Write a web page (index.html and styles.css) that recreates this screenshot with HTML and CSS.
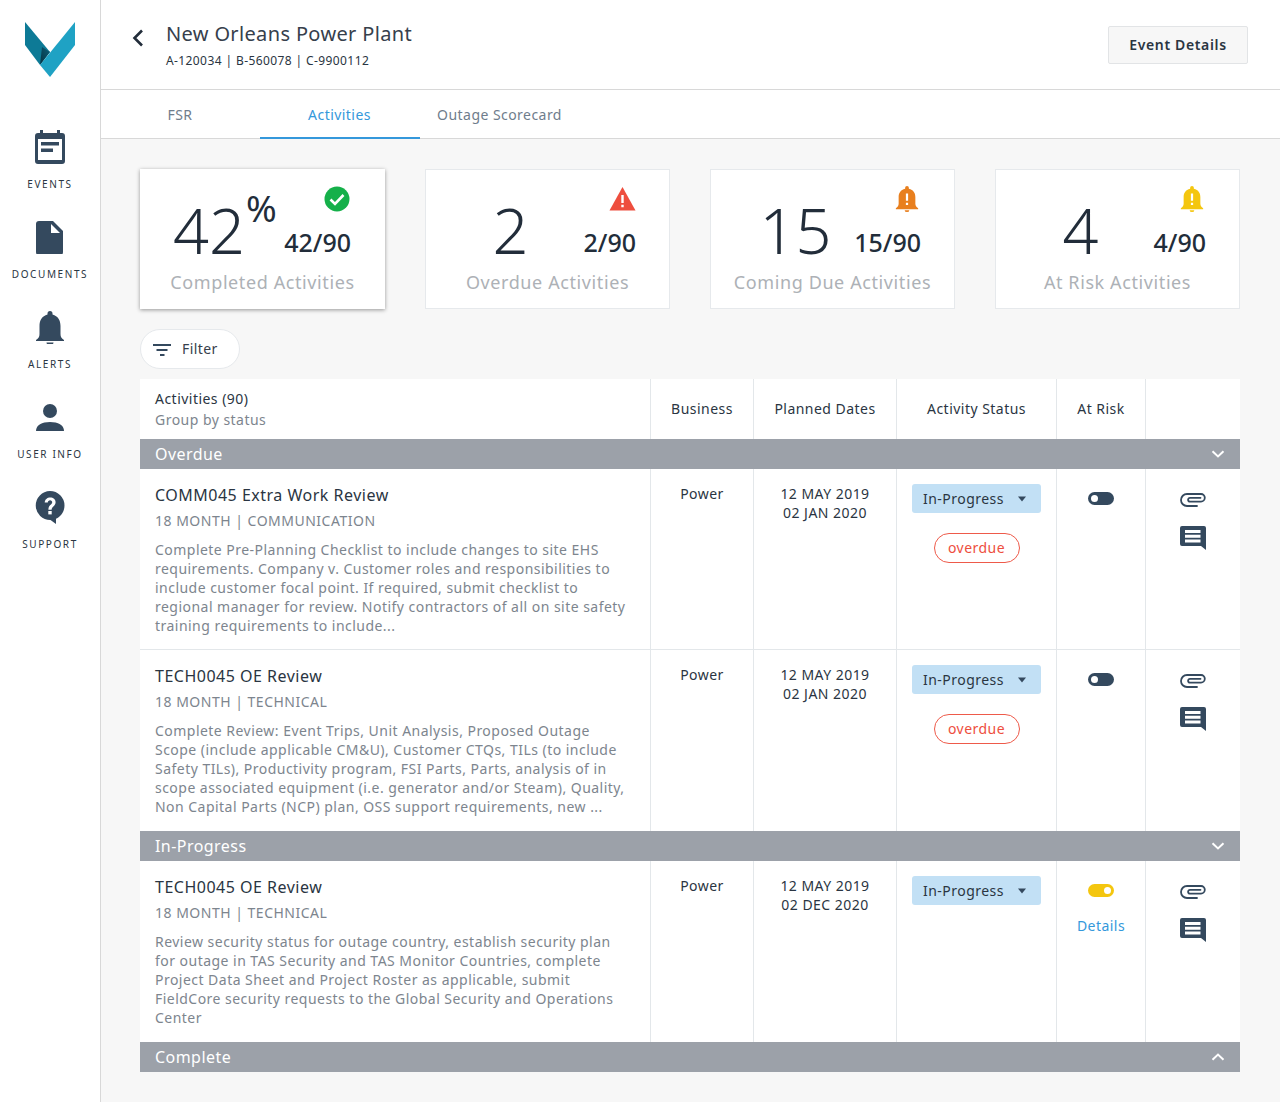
FILE: index.html
```html
<!DOCTYPE html>
<html lang="en">
<head>
<meta charset="utf-8">
<title>New Orleans Power Plant</title>
<link rel="stylesheet" href="styles.css">
</head>
<body>
<svg class="defs" width="0" height="0">
  <defs>
    <symbol id="clip" viewBox="0 0 26 14"><path d="M17 13H7A6 6 0 0 1 7 1H21A3.800 3.800 0 0 1 21 8.600H10A1.900 1.900 0 0 1 10 4.800H20.500" fill="none" stroke="#34495e" stroke-width="1.800" stroke-linecap="round"/></symbol>
    <symbol id="chat" viewBox="0 0 26 24"><path d="M2 0h22a2 2 0 0 1 2 2v22l-5-4H2a2 2 0 0 1-2-2V2a2 2 0 0 1 2-2z" fill="#34495e"/><path d="M5 4h15.500v3H5zM5 8.800h15.500v3H5zM5 13.600h15.500v3H5z" fill="#fff"/></symbol>
    <symbol id="caret" viewBox="0 0 10 6"><path d="M1 .5h8L5 5.500z" fill="#34495e"/></symbol>
    <symbol id="chev" viewBox="0 0 14 8"><path d="M1.500 1.200 7 6.400l5.500-5.200" fill="none" stroke="#fff" stroke-width="2"/></symbol>
    <linearGradient id="fold" x1="0" y1="1" x2="1" y2="0">
      <stop offset="0" stop-color="#06303f"/>
      <stop offset="1" stop-color="#0c5f78"/>
    </linearGradient>
  </defs>
</svg>
<div class="app">
  <nav class="side">
    <svg class="logo" viewBox="0 0 50 56" width="50" height="56">
      <polygon points="0,0 25,30 15,43 0,23" fill="#0d7a96"/>
      <polygon points="25,30 15,43 17,25" fill="url(#fold)"/>
      <polygon points="50,0 50,23 25,55 15,43" fill="#1fa2c4"/>
    </svg>
    <a class="nav-item">
      <svg viewBox="0 0 30 34" width="30" height="34"><path d="M5 0h3v3h14V0h3v3h2a3 3 0 0 1 3 3v25a3 3 0 0 1-3 3H3a3 3 0 0 1-3-3V6a3 3 0 0 1 3-3h2z" fill="#34495e"/><path d="M3 9h24v21H3z" fill="#fff"/><path d="M6 12h18v3.400H6zM6 18.500h12v3.400H6z" fill="#34495e"/></svg>
      <span>EVENTS</span>
    </a>
    <a class="nav-item">
      <svg viewBox="0 -1 27 34" width="27" height="34"><path d="M3 0h14l10 10v21a3 3 0 0 1-3 3H3a3 3 0 0 1-3-3V3a3 3 0 0 1 3-3z" fill="#34495e"/><path d="M15 3l9 9h-9z" fill="#fff"/></svg>
      <span>DOCUMENTS</span>
    </a>
    <a class="nav-item">
      <svg viewBox="0 -1 28 34" width="28" height="34"><path d="M14 0a2.500 2.500 0 0 1 2.500 2.500v1C22 5 24.500 9.500 24.500 15v8c0 3 1 4.500 3.500 6v1H0v-1c2.500-1.500 3.500-3 3.500-6v-8C3.500 9.500 6 5 11.500 3.500v-1A2.500 2.500 0 0 1 14 0z" fill="#34495e"/><path d="M10.500 31.500h7A3.500 2.500 0 0 1 10.500 31.500z" fill="#34495e"/></svg>
      <span>ALERTS</span>
    </a>
    <a class="nav-item">
      <svg viewBox="0 -4 28 34" width="28" height="34"><circle cx="14" cy="7" r="7" fill="#34495e"/><path d="M0 27c0-6 6-9 14-9s14 3 14 9z" fill="#34495e"/></svg>
      <span>USER INFO</span>
    </a>
    <a class="nav-item">
      <svg viewBox="0 -1 30 34" width="30" height="34"><path d="M15 0a14.500 14.500 0 0 1 14.500 14.500c0 6-3.500 11-8.500 13.300V33l-5.500-4A14.500 14.500 0 0 1 15 0z" fill="#34495e"/><path d="M9.700 11.500c.2-3 2.500-5 5.500-5s5.400 1.900 5.400 4.700c0 4-4 4-4 7.600h-3.200c0-5 3.800-5 3.800-7.500 0-1-.8-2-2.100-2-1.400 0-2.200 1-2.300 2.200z" fill="#fff"/><rect x="13.300" y="20" width="3.400" height="3.400" fill="#fff"/></svg>
      <span>SUPPORT</span>
    </a>
  </nav>
  <div class="main">
    <header class="top">
      <svg class="back" viewBox="0 0 12 18" width="12" height="18"><path d="M10 1.500 2.500 9l7.500 7.500" fill="none" stroke="#222d3a" stroke-width="2.600"/></svg>
      <div class="titles">
        <h1>New Orleans Power Plant</h1>
        <p>A-120034 | B-560078 | C-9900112</p>
      </div>
      <button class="details-btn">Event Details</button>
    </header>
    <div class="tabs">
      <a class="tab">FSR</a>
      <a class="tab active">Activities</a>
      <a class="tab">Outage Scorecard</a>
    </div>
    <div class="content">
      <section class="cards">
        <div class="card raised">
          <div class="card-top">
            <div class="big big-pct">42<sup>%</sup></div>
            <div class="card-side">
              <svg class="ic-check" viewBox="0 0 26 26" width="26" height="26"><circle cx="13" cy="13" r="12.500" fill="#15b04a"/><path d="M6.500 13.500l4.500 4.500 8.500-9" fill="none" stroke="#fff" stroke-width="2.600"/></svg>
              <b>42/90</b>
            </div>
          </div>
          <div class="card-label">Completed Activities</div>
        </div>
        <div class="card">
          <div class="card-top">
            <div class="big">2</div>
            <div class="card-side">
              <svg viewBox="0 0 26 26" width="27" height="26"><path d="M13 1 26 24.500H0z" fill="#ee4e3e"/><path d="M11.800 9h2.400v8h-2.400zM11.800 18.800h2.400v2.400h-2.400z" fill="#fff"/></svg>
              <b>2/90</b>
            </div>
          </div>
          <div class="card-label">Overdue Activities</div>
        </div>
        <div class="card">
          <div class="card-top">
            <div class="big">15</div>
            <div class="card-side">
              <svg class="ic-bell" viewBox="0 0 24 28" width="24" height="26"><path d="M12 0a2 2 0 0 1 2 2v1c5 1 7 5 7 9v7c0 2 1 3.500 3 5v1H0v-1c2-1.500 3-3 3-5v-7c0-4 2-8 7-9V2a2 2 0 0 1 2-2z" fill="#e87f1e"/><path d="M9.500 26h5a2.500 2 0 0 1-5 0z" fill="#e87f1e"/><path d="M10.800 8h2.400v8h-2.400zM10.800 18h2.400v2.400h-2.400z" fill="#fff"/></svg>
              <b>15/90</b>
            </div>
          </div>
          <div class="card-label">Coming Due Activities</div>
        </div>
        <div class="card">
          <div class="card-top">
            <div class="big">4</div>
            <div class="card-side">
              <svg class="ic-bell" viewBox="0 0 24 28" width="24" height="26"><path d="M12 0a2 2 0 0 1 2 2v1c5 1 7 5 7 9v7c0 2 1 3.500 3 5v1H0v-1c2-1.500 3-3 3-5v-7c0-4 2-8 7-9V2a2 2 0 0 1 2-2z" fill="#f4c60f"/><path d="M9.500 26h5a2.500 2 0 0 1-5 0z" fill="#f4c60f"/><path d="M10.800 8h2.400v8h-2.400zM10.800 18h2.400v2.400h-2.400z" fill="#fff"/></svg>
              <b>4/90</b>
            </div>
          </div>
          <div class="card-label">At Risk Activities</div>
        </div>
      </section>
      <button class="filter">
        <svg viewBox="0 0 18 12" width="18" height="12"><path d="M0 0h18v2H0zM3.500 5h11v2h-11zM7 10h4.500v2H7z" fill="#34495e"/></svg>
        Filter
      </button>
      <section class="table">
        <div class="row head">
          <div class="cell first"><div>Activities (90)</div><div class="sub">Group by status</div></div>
          <div class="cell ctr">Business</div>
          <div class="cell ctr">Planned Dates</div>
          <div class="cell ctr">Activity Status</div>
          <div class="cell ctr">At Risk</div>
          <div class="cell"></div>
        </div>
        <div class="group">Overdue<svg width="14" height="8"><use href="#chev"/></svg></div>
        <div class="row item divided">
          <div class="cell first">
            <h2>COMM045 Extra Work Review</h2>
            <div class="meta">18 MONTH | COMMUNICATION</div>
            <p>Complete Pre-Planning Checklist to include changes to site EHS<br>requirements. Company v. Customer roles and responsibilities to<br>include customer focal point. If required, submit checklist to<br>regional manager for review. Notify contractors of all on site safety<br>training requirements to include...</p>
          </div>
          <div class="cell top-c">Power</div>
          <div class="cell top-c">12 MAY 2019<br>02 JAN 2020</div>
          <div class="cell status">
            <div class="select">In-Progress<svg width="10" height="6"><use href="#caret"/></svg></div>
            <div class="pill">overdue</div>
          </div>
          <div class="cell risk"><div class="toggle"></div></div>
          <div class="cell acts"><svg width="26" height="14"><use href="#clip"/></svg><svg width="26" height="24"><use href="#chat"/></svg></div>
        </div>
        <div class="row item">
          <div class="cell first">
            <h2>TECH0045 OE Review</h2>
            <div class="meta">18 MONTH | TECHNICAL</div>
            <p>Complete Review: Event Trips, Unit Analysis, Proposed Outage<br>Scope (include applicable CM&amp;U), Customer CTQs, TILs (to include<br>Safety TILs), Productivity program, FSI Parts, Parts, analysis of in<br>scope associated equipment (i.e. generator and/or Steam), Quality,<br>Non Capital Parts (NCP) plan, OSS support requirements, new ...</p>
          </div>
          <div class="cell top-c">Power</div>
          <div class="cell top-c">12 MAY 2019<br>02 JAN 2020</div>
          <div class="cell status">
            <div class="select">In-Progress<svg width="10" height="6"><use href="#caret"/></svg></div>
            <div class="pill">overdue</div>
          </div>
          <div class="cell risk"><div class="toggle"></div></div>
          <div class="cell acts"><svg width="26" height="14"><use href="#clip"/></svg><svg width="26" height="24"><use href="#chat"/></svg></div>
        </div>
        <div class="group">In-Progress<svg width="14" height="8"><use href="#chev"/></svg></div>
        <div class="row item">
          <div class="cell first">
            <h2>TECH0045 OE Review</h2>
            <div class="meta">18 MONTH | TECHNICAL</div>
            <p>Review security status for outage country, establish security plan<br>for outage in TAS Security and TAS Monitor Countries, complete<br>Project Data Sheet and Project Roster as applicable, submit<br>FieldCore security requests to the Global Security and Operations<br>Center</p>
          </div>
          <div class="cell top-c">Power</div>
          <div class="cell top-c">12 MAY 2019<br>02 DEC 2020</div>
          <div class="cell status">
            <div class="select">In-Progress<svg width="10" height="6"><use href="#caret"/></svg></div>
          </div>
          <div class="cell risk"><div class="toggle on"></div><a class="link">Details</a></div>
          <div class="cell acts"><svg width="26" height="14"><use href="#clip"/></svg><svg width="26" height="24"><use href="#chat"/></svg></div>
        </div>
        <div class="group">Complete<svg class="up" width="14" height="8"><use href="#chev"/></svg></div>
      </section>
    </div>
  </div>
</div>
</body>
</html>
```
FILE: styles.css
```css
* { box-sizing: border-box; }
html, body { margin: 0; padding: 0; }
body {
  font-family: "Noto Sans", sans-serif;
  font-size: 14px;
  color: #2a3542;
  background: #f7f7f7;
}
.defs { position: absolute; }
.app { display: flex; height: 1102px; overflow: hidden; }

.side {
  width: 101px;
  flex: none;
  background: #fff;
  border-right: 1px solid #d8d8d8;
  display: flex;
  flex-direction: column;
  align-items: center;
  padding-top: 22px;
}
.logo { margin-bottom: 52px; }
.nav-item {
  height: 90px;
  display: flex;
  flex-direction: column;
  align-items: center;
}
.nav-item svg { height: 34px; display: block; }
.nav-item span {
  margin-top: 13px;
  font-size: 10px;
  line-height: 14px;
  letter-spacing: 1.600px;
  color: #2a3542;
}

.main { flex: 1; min-width: 0; display: flex; flex-direction: column; }
.top {
  height: 90px;
  background: #fff;
  border-bottom: 1px solid #d8d8d8;
  display: flex;
  align-items: flex-start;
  padding: 0 32px 0 31px;
}
.back { margin-top: 29px; margin-right: 22px; flex: none; }
.titles { flex: 1; padding-top: 20px; }
.titles h1 {
  margin: 0;
  font-size: 20px;
  line-height: 28px;
  font-weight: 400;
  letter-spacing: .35px;
  color: #36404c;
}
.titles p { margin: 5px 0 0; font-size: 12px; line-height: 16px; letter-spacing: .4px; color: #2a3542; }
.details-btn {
  margin-top: 26px;
  width: 140px;
  height: 38px;
  padding: 0 0 2px;
  font: 600 14px "Noto Sans", sans-serif;
  letter-spacing: .65px;
  color: #2a3542;
  background: #f7f7f7;
  border: 1px solid #e2e4e6;
  border-radius: 2px;
}

.tabs {
  height: 49px;
  background: #fff;
  border-bottom: 1px solid #d8d8d8;
  display: flex;
}
.tab {
  width: 160px;
  height: 48px;
  display: flex;
  align-items: center;
  justify-content: center;
  padding-right: 1px;
  letter-spacing: .45px;
  color: #6f7d8c;
}
.tab:first-child { width: 159px; }
.tab.active { color: #3498db; border-bottom: 2px solid #3498db; height: 49px; padding-top: 1px; }

.content { padding: 30px 40px 0 39px; }
.cards { display: flex; gap: 40px; }
.card {
  width: 245px;
  height: 140px;
  background: #fff;
  border: 1px solid #e6e9ec;
  padding: 16px 33px 0;
}
.card.raised { border: 0; box-shadow: 0 1px 4px rgba(0,0,0,.4); padding: 17px 34px 0; }
.card-top { display: flex; justify-content: space-between; height: 83px; }
.big {
  flex: none;
  width: 103px;
  text-align: center;
  font-size: 63px;
  line-height: 64px;
  padding-top: 12px;
  font-weight: 300;
  color: #222d3a;
}
.big-pct { text-align: left; white-space: nowrap; width: auto; margin-left: -1px; }
.big sup {
  font-size: 37px;
  line-height: 0;
  vertical-align: 32px;
  margin-left: 1px;
  font-weight: 400;
}
.card-side {
  display: flex;
  flex-direction: column;
  align-items: flex-end;
  flex: none;
}
.card-side svg { display: block; }
.ic-check { margin-right: 1px; }
.ic-bell { margin-right: 2px; }
.card-side b {
  margin-top: 15px;
  font-size: 25px;
  line-height: 30px;
  font-weight: 500;
  color: #222d3a;
}
.card-label {
  margin: 0 -20px;
  text-align: center;
  font-size: 18px;
  line-height: 26px;
  letter-spacing: .6px;
  color: #adb1b6;
  white-space: nowrap;
}

.filter {
  margin: 20px 0 10px;
  width: 100px;
  height: 40px;
  display: flex;
  align-items: center;
  gap: 11px;
  padding: 0 0 2px 12px;
  background: #fff;
  border: 1px solid #e6e9ec;
  border-radius: 20px;
  font: 14px "Noto Sans", sans-serif;
  letter-spacing: .4px;
  color: #36404c;
}
.filter svg { margin-top: 4px; }

.table { width: 1100px; }
.row {
  display: grid;
  grid-template-columns: 510px 103px 143px 160px 89px 95px;
  background: #fff;
}
.cell { border-left: 1px solid #e3e7ea; font-size: 14px; letter-spacing: .47px; }
.cell.first { border-left: 0; padding-left: 15px; }
.head { height: 60px; }
.head .first { padding-top: 9px; line-height: 22px; }
.sub { color: #7d858e; line-height: 20px; }
.ctr { display: flex; align-items: center; justify-content: center; padding-bottom: 1px; }
.group {
  height: 30px;
  background: #9ca1a9;
  color: #fff;
  font-size: 16px;
  letter-spacing: .45px;
  line-height: 30px;
  padding: 0 15px;
  display: flex;
  justify-content: space-between;
  align-items: center;
}
.group .up { transform: rotate(180deg); }
.item { height: 181px; }
.divided { border-bottom: 1px solid #e3e7ea; }
.item .first { padding-top: 14px; }
.item h2 { margin: 0; font-size: 16px; line-height: 24px; font-weight: 400; letter-spacing: .5px; color: #2a3542; }
.meta { margin-top: 3px; line-height: 22px; letter-spacing: .5px; color: #7d858e; }
.item p { margin: 8px 0 0; line-height: 19px; color: #7d858e; white-space: nowrap; }
.top-c { text-align: center; padding-top: 15px; line-height: 19px; }
.status { display: flex; flex-direction: column; align-items: center; padding-top: 15px; }
.select {
  width: 129px;
  height: 29px;
  background: #c2e0f5;
  border-radius: 3px;
  display: flex;
  align-items: center;
  justify-content: space-between;
  padding: 0 14px 0 11px;
  color: #2a3542;
}
.pill {
  margin-top: 20px;
  width: 86px;
  height: 30px;
  border: 1px solid #ee5a4a;
  border-radius: 15px;
  color: #ee4e3e;
  text-align: center;
  line-height: 28px;
}
.risk { display: flex; flex-direction: column; align-items: center; padding-top: 23px; }
.toggle {
  position: relative;
  width: 26px;
  height: 13px;
  border-radius: 7px;
  background: #34495e;
}
.toggle::after {
  content: "";
  position: absolute;
  left: 3px;
  top: 3px;
  width: 7px;
  height: 7px;
  border-radius: 50%;
  background: #fff;
}
.toggle.on { background: #f4c60f; }
.toggle.on::after { left: auto; right: 3px; }
.link { margin-top: 19px; color: #3498db; }
.acts { display: flex; flex-direction: column; align-items: center; padding-top: 24px; gap: 19px; }
.acts svg { display: block; }
```
